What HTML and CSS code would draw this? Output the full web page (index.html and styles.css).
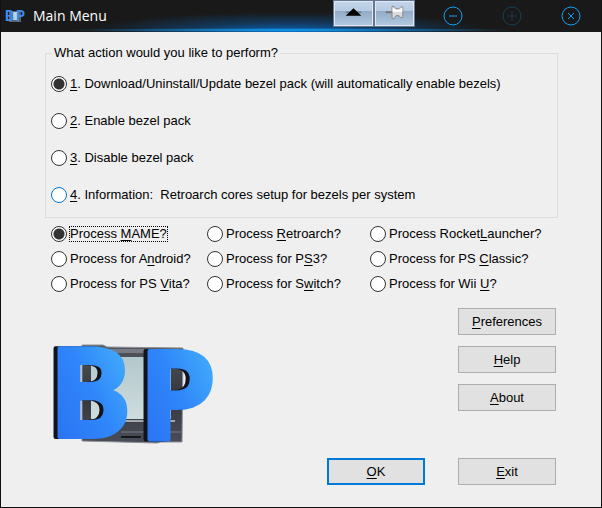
FILE: index.html
```html
<!DOCTYPE html>
<html lang="en">
<head>
  <meta charset="UTF-8" />
  <meta name="viewport" content="width=device-width, initial-scale=1.0"/>
  <title>Main Menu</title>
  <link rel="stylesheet" href="styles.css">
</head>
<body>

<div class="window">
  <header class="title-bar">
    <svg class="app-icon" viewBox="0 0 20 12" aria-hidden="true">
      <path d="M4 1H16V12H4Z" fill="#5b6470"/>
      <path d="M8 2H12V10H8Z" fill="#b9d3e0"/>
      <text class="icon-letter" x="0" y="11">B</text>
      <text class="icon-letter" x="11" y="11">P</text>
    </svg>
    <h1>Main Menu</h1>

    <div class="extra-buttons">
      <button type="button" aria-label="Roll up">
        <svg viewBox="0 0 40 25">
          <path d="M12 11.500H28" stroke="#5d6470" stroke-width="1"/>
          <path d="M20 7.500L28 15H12Z" fill="#000"/>
        </svg>
      </button>
      <button type="button" aria-label="Pin">
        <svg viewBox="0 0 40 25">
          <path d="M11 11.500H18" stroke="#777" stroke-width="2"/>
          <path d="M17.500 5.500H19.500L21.500 8H24.500L26.500 6H28.500V17H26.500L24.500 15H21.500L19.500 18H17.500Z" fill="#dcdcdc" stroke="#8a8a8a"/>
          <path d="M18 7H19L21 9H26L27 7H28V11H18Z" fill="#fff"/>
        </svg>
      </button>
    </div>

    <div class="window-buttons">
      <button type="button" aria-label="Minimize">
        <svg viewBox="0 0 20 20"><circle cx="10" cy="10" r="9"/><path d="M6 10H14"/></svg>
      </button>
      <button type="button" aria-label="Maximize" class="dim" disabled>
        <svg viewBox="0 0 20 20"><circle cx="10" cy="10" r="9"/><path d="M5 10H15M10 5V15"/></svg>
      </button>
      <button type="button" aria-label="Close">
        <svg viewBox="0 0 20 20"><circle cx="10" cy="10" r="9"/><path d="M7 7L13 13M13 7L7 13"/></svg>
      </button>
    </div>
  </header>

  <form class="content">
    <fieldset class="actions">
      <legend>What action would you like to perform?</legend>
      <label><input type="radio" name="action" checked><span><u>1</u>. Download/Uninstall/Update bezel pack (will automatically enable bezels)</span></label>
      <label><input type="radio" name="action"><span><u>2</u>. Enable bezel pack</span></label>
      <label><input type="radio" name="action"><span><u>3</u>. Disable bezel pack</span></label>
      <label><input type="radio" name="action" class="hot"><span><u>4</u>. Information:&nbsp; Retroarch cores setup for bezels per system</span></label>
    </fieldset>

    <div class="systems">
      <label><input type="radio" name="system" checked><span class="focused">Process <u>M</u>AME?</span></label>
      <label><input type="radio" name="system"><span>Process <u>R</u>etroarch?</span></label>
      <label><input type="radio" name="system"><span>Process Rocket<u>L</u>auncher?</span></label>
      <label><input type="radio" name="system"><span>Process for A<u>n</u>droid?</span></label>
      <label><input type="radio" name="system"><span>Process for P<u>S</u>3?</span></label>
      <label><input type="radio" name="system"><span>Process for PS <u>C</u>lassic?</span></label>
      <label><input type="radio" name="system"><span>Process for PS <u>V</u>ita?</span></label>
      <label><input type="radio" name="system"><span>Process for S<u>w</u>itch?</span></label>
      <label><input type="radio" name="system"><span>Process for Wii <u>U</u>?</span></label>
    </div>

    <div class="bottom">
      <svg class="logo" viewBox="0 0 160 104" role="img" aria-label="BP">
        <defs>
          <linearGradient id="blue" x1="0" y1="1" x2="1" y2="0">
            <stop offset="0" stop-color="#2a6cf0"/>
            <stop offset="0.5" stop-color="#2f86fa"/>
            <stop offset="1" stop-color="#4cc0fb"/>
          </linearGradient>
          <linearGradient id="glass" x1="0" y1="0" x2="0" y2="1">
            <stop offset="0" stop-color="#b3c8cc"/>
            <stop offset="1" stop-color="#cfdcde"/>
          </linearGradient>
          <linearGradient id="frame" x1="0" y1="0" x2="0" y2="1">
            <stop offset="0" stop-color="#55575f"/>
            <stop offset="0.5" stop-color="#34363c"/>
            <stop offset="1" stop-color="#4a4d57"/>
          </linearGradient>
        </defs>
        <!-- cabinet and screen -->
        <path d="M29 3H50L54 5L130 6L129 100H108L104 101L29 99Z" fill="url(#frame)" stroke="#8d9096"/>
        <path d="M36 7H128V11H36Z" fill="#777a82"/>
        <path d="M38 15H118V77H38Z" fill="url(#glass)"/>
        <path d="M32 78H122V80H32Z" fill="#a3a8ad"/>
        <path d="M68 90H128" stroke="#767b87"/>
        <path d="M68 95H88" stroke="#17181c" stroke-width="2"/>
        <!-- letters, the dark side is the drop shadow -->
        <g class="letters">
          <text x="-4" y="95">B</text>
          <text x="86" y="97">P</text>
        </g>
      </svg>

      <div class="buttons">
        <button type="button"><u>P</u>references</button>
        <button type="button"><u>H</u>elp</button>
        <button type="button"><u>A</u>bout</button>
        <div class="confirm">
          <button type="button" class="default"><u>O</u>K</button>
          <button type="button"><u>E</u>xit</button>
        </div>
      </div>
    </div>
  </form>
</div>

</body>
</html>
```
FILE: styles.css
```css
* {
  box-sizing: border-box;
}

body {
  margin: 0;
  font-family: "Liberation Sans", Arial, sans-serif;
  font-size: 13px;
  line-height: 20px;
  color: #000;
}

u {
  text-underline-offset: 2px;
}

.window {
  min-height: 100vh;
  border: 1px solid #111;
  border-top: none;
  background-color: #efefef;
}

/* title bar */
.title-bar {
  display: flex;
  align-items: center;
  height: 32px;
  padding: 0 20px 0 4px;
  background:
    radial-gradient(ellipse 230px 2px at 48% 30px, #14a0f5, transparent),
    radial-gradient(ellipse 200px 20px at 48% 100%, #0a62b4, rgba(10, 98, 180, 0.4) 50%, transparent),
    #191919;
}

.app-icon {
  width: 20px;
  height: 12px;
  overflow: visible;
}

.icon-letter {
  font: 700 14px Roboto, sans-serif;
  fill: #3d8bf2;
}

.title-bar h1 {
  flex: 1;
  margin: 0 0 0 8px;
  font: 14px/20px "Open Sans", sans-serif;
  color: #fff;
}

.title-bar button {
  padding: 0;
  background: none;
  border: none;
}

.title-bar svg {
  display: block;
}

.extra-buttons {
  display: flex;
  align-self: flex-start;
  margin-right: 28px;
}

.title-bar .extra-buttons button {
  width: 41px;
  height: 27px;
  border: 1px solid #66778f;
  background: linear-gradient(#c3d5e9, #b5cae2 42%, #94abc7 42%, #b3cae2);
  box-shadow: inset 0 0 0 1px #dde8f4;
}

.window-buttons {
  display: flex;
  gap: 39px;
}

.window-buttons svg {
  width: 20px;
  height: 20px;
  fill: none;
  stroke: #14a0f5;
}

.window-buttons .dim svg {
  stroke: #153e57;
}

/* radio groups */
.content {
  padding: 11px 43px 20px 44px;
}

label {
  display: flex;
  align-items: center;
  gap: 3px;
  white-space: nowrap;
}

input[type="radio"] {
  appearance: none;
  width: 16px;
  height: 16px;
  margin: 0;
  border: 1px solid #333;
  border-radius: 50%;
  background-color: #fff;
}

input[type="radio"]:checked {
  background: radial-gradient(circle, #333 5px, #fff 6px);
}

input.hot {
  border-color: #0078d7;
}

.actions {
  display: flex;
  flex-direction: column;
  gap: 17px;
  margin: 0;
  padding: 11px 5px 12px;
  border: 1px solid #dcdcdc;
}

.actions legend {
  margin-left: 1px;
  padding: 0 2px;
}

.systems {
  display: grid;
  grid-template-columns: 156px 163px 1fr;
  row-gap: 5px;
  padding: 6px 6px 0;
}

.focused {
  line-height: 14px;
  outline: 1px dotted #000;
}

/* logo and buttons */
.bottom {
  display: flex;
  justify-content: space-between;
  align-items: flex-start;
  padding: 14px 2px 0 8px;
}

.logo {
  width: 160px;
  height: 104px;
  margin-top: 34px;
  overflow: visible;
}

.letters {
  font: 700 124px "Noto Sans", "Open Sans", sans-serif;
  fill: url(#blue);
  stroke: url(#blue);
  stroke-width: 4px;
  stroke-linejoin: round;
  filter: drop-shadow(-4px 0 0 #10131c);
}

.buttons {
  display: flex;
  flex-direction: column;
  align-items: flex-end;
  gap: 11px;
}

.buttons button {
  width: 98px;
  height: 27px;
  padding: 0;
  border: 1px solid #adadad;
  background-color: #e1e1e1;
  font: inherit;
  color: #000;
}

.buttons .default {
  border: 2px solid #0078d7;
}

.confirm {
  display: flex;
  gap: 33px;
  margin-top: 36px;
}
```
